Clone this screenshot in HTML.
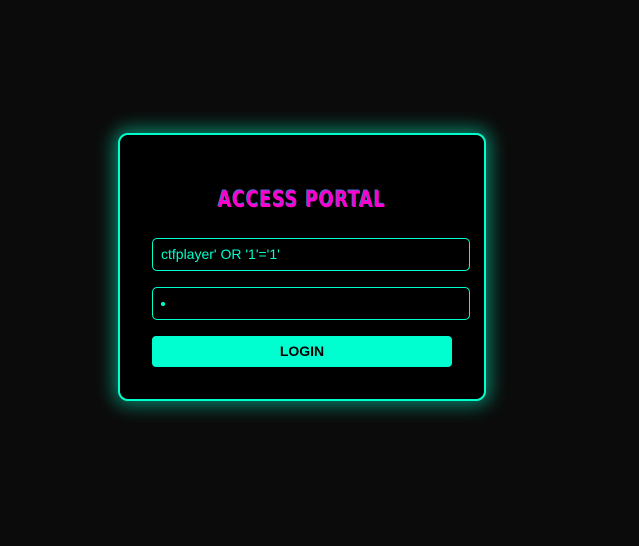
<!DOCTYPE html>
<html><head><style>
html,body{margin:0;padding:0;width:639px;height:546px;background:#0b0b0b;overflow:hidden;font-family:"Liberation Sans",sans-serif}
.card{position:absolute;left:118px;top:133px;width:364px;height:264px;border:2px solid #00ffcc;border-radius:10px;background:#000;box-shadow:0 0 18px 4px rgba(0,255,204,.5)}
.title{position:absolute;left:118px;width:368px;top:188px;text-align:center;color:#ff00cc;font-family:"DejaVu Sans Condensed","DejaVu Sans",sans-serif;font-weight:bold;font-size:22px;letter-spacing:1px;text-shadow:-1px -1px 0 #3a6fd0;transform:scaleX(0.88);transform-origin:184px 0}
.inp{position:absolute;left:152px;width:316px;height:31px;border:1px solid #00ffcc;border-radius:5px;background:#000;color:#00ffcc;font-size:14px;line-height:31px;box-sizing:content-box}
.btn{position:absolute;left:152px;top:336px;width:300px;height:31px;background:#00ffd0;border-radius:4px;color:#000;font-size:14px;font-weight:bold;text-align:center;line-height:31px}
</style></head><body>
<div class="card"></div>
<div class="title">ACCESS PORTAL</div>
<div class="inp" style="top:238px"><span style="padding-left:8px">ctfplayer' OR '1'='1'</span></div>
<div class="inp" style="top:287px"><span style="position:absolute;left:8px;top:14px;width:4px;height:4px;border-radius:50%;background:#00ffcc"></span></div>
<div class="btn">LOGIN</div>
</body></html>
